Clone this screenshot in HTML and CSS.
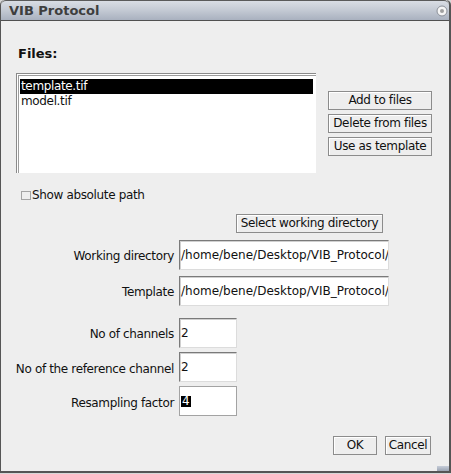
FILE: index.html
```html
<!DOCTYPE html>
<html>
<head>
<meta charset="utf-8">
<title>VIB Protocol</title>
<link rel="stylesheet" href="styles.css">
</head>
<body>
<div class="window">
  <div class="titlebar">
    <span class="title">VIB Protocol</span>
    <svg class="close" width="12" height="12" viewBox="0 0 12 12">
      <circle cx="6" cy="6" r="5" fill="#f5f5f5" stroke="#8a8f98" stroke-width="1"/>
      <circle cx="6" cy="6" r="2" fill="#a0a0a0"/>
    </svg>
  </div>
  <div class="content">
    <div class="files-label">Files:</div>
    <div class="files-row">
      <div class="list">
        <div class="item selected">template.tif</div>
        <div class="item">model.tif</div>
      </div>
      <div class="side-buttons">
        <div class="btn side">Add to files</div>
        <div class="btn side">Delete from files</div>
        <div class="btn side">Use as template</div>
      </div>
    </div>
    <div class="check"><span class="box"></span><span>Show absolute path</span></div>
    <div class="dir-row"><div class="btn dir">Select working directory</div></div>
    <div class="form">
      <div class="lbl">Working directory</div>
      <div class="field wide">/home/bene/Desktop/VIB_Protocol/</div>
      <div class="lbl r2">Template</div>
      <div class="field wide r2">/home/bene/Desktop/VIB_Protocol/</div>
      <div class="lbl r3">No of channels</div>
      <div class="field small r3">2</div>
      <div class="lbl r4">No of the reference channel</div>
      <div class="field small r4">2</div>
      <div class="lbl r4">Resampling factor</div>
      <div class="field small focus r4"><span class="sel">4</span></div>
    </div>
    <div class="footer">
      <div class="btn ok">OK</div>
      <div class="btn cancel">Cancel</div>
    </div>
  </div>
  <div class="grip"></div>
</div>
</body>
</html>
```

FILE: styles.css
```css
html, body {
  margin: 0;
  padding: 0;
  background: #d8d8d8;
}
body {
  font-family: "DejaVu Sans", sans-serif;
  font-size: 12px;
  letter-spacing: -0.35px;
  color: #111;
}
.window {
  position: relative;
  width: 451px;
  height: 473px;
  box-sizing: border-box;
  background: #eeeeee;
  border-left: 1px solid #555;
  border-right: 2px solid #555;
  border-bottom: 2px solid #555;
  border-radius: 5px 5px 0 0;
  overflow: hidden;
}
.titlebar {
  height: 19px;
  border-top: 1px solid #5a5a5a;
  border-bottom: 1px solid #505050;
  background: linear-gradient(#d9dde4, #c3c9d3 50%, #a9b1bf);
  display: flex;
  align-items: center;
  border-radius: 5px 5px 0 0;
}
.title {
  font-size: 13px;
  font-weight: bold;
  letter-spacing: 0;
  color: #3e3e3e;
  padding-left: 8px;
  line-height: 19px;
}
.close {
  margin-left: auto;
  margin-right: 1px;
  margin-top: 1px;
}
.content {
  padding-left: 15px;
}
.files-label {
  margin-top: 25px;
  font-size: 13px;
  font-weight: bold;
  letter-spacing: 0;
  line-height: 15px;
  padding-left: 2px;
  color: #111;
}
.files-row {
  display: flex;
  margin-top: 12px;
}
.list {
  width: 300px;
  height: 100px;
  box-sizing: border-box;
  background: #fff;
  border-left: 1px solid #8a8a8a;
  border-top: 1px solid #8a8a8a;
  box-shadow: inset 1px 1px 0 #fff, inset 2px 2px 0 #9c9c9c;
  padding: 5px 3px 0 3px;
}
.item {
  height: 15px;
  line-height: 15px;
  padding-left: 1px;
}
.item.selected {
  background: #000;
  color: #fff;
}
.side-buttons {
  display: flex;
  flex-direction: column;
  gap: 4px;
  margin-left: 12px;
  margin-top: 18px;
}
.btn {
  box-sizing: border-box;
  height: 19px;
  line-height: 17px;
  text-align: center;
  background: #eeeeee;
  border: 1px solid #8c8c8c;
  box-shadow: inset 1px 1px 0 #fff;
  white-space: nowrap;
}
.btn.side {
  width: 104px;
}
.check {
  display: flex;
  align-items: center;
  height: 14px;
  margin-top: 15px;
  margin-left: 5px;
}
.box {
  width: 10px;
  height: 9px;
  box-sizing: border-box;
  border: 1px solid #a4a4a4;
  margin-right: 1px;
}
.dir-row {
  display: flex;
  margin-top: 12px;
  padding-left: 220px;
}
.btn.dir {
  width: 147px;
}
.form {
  display: grid;
  grid-template-columns: 168px auto;
  column-gap: 5px;
  row-gap: 6px;
  margin-left: -10px;
  margin-top: 7px;
  align-items: center;
  justify-items: start;
}
.lbl {
  justify-self: end;
  white-space: nowrap;
  padding-top: 2px;
}
.lbl.r3, .field.r3 {
  margin-top: 6px;
}
.lbl.r4, .field.r4 {
  margin-top: -2px;
}
.lbl.r4 {
  margin-top: 0;
}
.field {
  box-sizing: border-box;
  height: 30px;
  line-height: 29px;
  background: #fff;
  border: 1px solid;
  border-color: #7a7a7a #dcdcdc #dcdcdc #7a7a7a;
  box-shadow: inset 1px 1px 0 #d0d0d0;
  padding-left: 1px;
  white-space: nowrap;
  overflow: hidden;
}
.field.wide {
  width: 210px;
  letter-spacing: 0;
}
.field.small {
  width: 58px;
}
.field.focus {
  border-color: #a3a3a3;
  box-shadow: none;
}
.sel {
  display: inline-block;
  background: #000;
  color: #fff;
  height: 11px;
  line-height: 11px;
  padding: 0 2px 0 1px;
  vertical-align: middle;
}
.footer {
  display: flex;
  justify-content: flex-end;
  gap: 8px;
  margin-top: 20px;
  padding-right: 18px;
}
.btn.ok {
  width: 44px;
}
.btn.cancel {
  width: 46px;
}
.grip {
  position: absolute;
  right: 0;
  bottom: 0;
  width: 12px;
  height: 5px;
  background: linear-gradient(#c6cdd8, #9aa3b3);
}
```
